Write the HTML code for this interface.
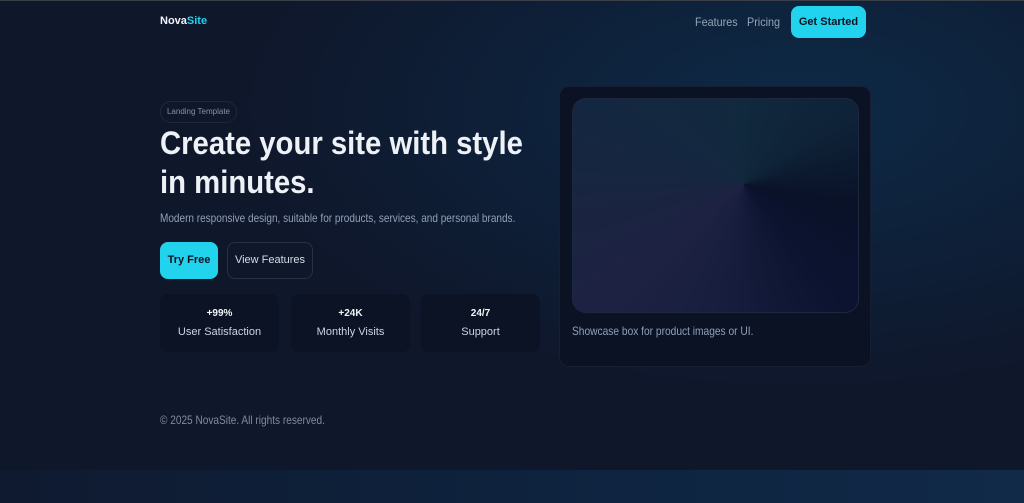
<!DOCTYPE html>
<html><head><meta charset="utf-8"><style>
*{margin:0;padding:0;box-sizing:border-box}
body{width:1024px;height:503px;overflow:hidden;font-family:"Liberation Sans",sans-serif;color:#e5e9f0;position:relative;
background:radial-gradient(ellipse 560px 280px at 800px 110px,#0d2a47 0%,rgba(13,42,71,0.5) 50%,rgba(15,23,42,0) 100%),#0f172b;}
.top{position:absolute;left:0;top:0;width:1024px;height:1px;background:#3a3f48}
.band{position:absolute;left:0;top:470px;width:1024px;height:33px;background:linear-gradient(90deg,#0f1a30,#0e2440 60%,#112a48)}
.n{position:absolute;white-space:nowrap}
.sq{display:inline-block;transform-origin:left top}
</style></head><body>
<div class="top"></div>
<div class="band"></div>
<div class="n" style="left:160px;top:15px;font-size:11px;font-weight:bold;color:#f1f5f9">Nova<span style="color:#22d3ee">Site</span></div>
<div class="n" style="left:695px;top:15px;font-size:12px;color:#94a3b8"><span class="sq" style="transform:scaleX(.9)">Features</span></div>
<div class="n" style="left:747px;top:15px;font-size:12px;color:#94a3b8"><span class="sq" style="transform:scaleX(.9)">Pricing</span></div>
<div class="n" style="left:791px;top:6px;width:75px;height:32px;border-radius:8px;background:#22d3ee;color:#0b1220;font-size:11px;font-weight:bold;text-align:center;line-height:32px">Get Started</div>
<div class="n" style="left:160px;top:101px;width:77px;height:22px;border:1px solid #1e293b;border-radius:11px;font-size:8px;color:#8391a6;text-align:center;line-height:20px">Landing Template</div>
<div class="n" style="left:160px;top:124px;font-size:32px;font-weight:bold;line-height:39px;color:#eef2f6"><span class="sq" style="transform:scaleX(.915)">Create your site with style<br>in minutes.</span></div>
<div class="n" style="left:160px;top:211px;font-size:12px;color:#8fa0b8"><span class="sq" style="transform:scaleX(.835)">Modern responsive design, suitable for products, services, and personal brands.</span></div>
<div class="n" style="left:160px;top:242px;width:58px;height:37px;border-radius:8px;background:#22d3ee;color:#0b1220;font-size:11px;font-weight:bold;text-align:center;line-height:37px">Try Free</div>
<div class="n" style="left:227px;top:242px;width:86px;height:37px;border-radius:8px;border:1px solid #263246;color:#d6dde6;font-size:11px;text-align:center;line-height:35px">View Features</div>
<div class="n" style="left:160px;top:294px;width:119px;height:58px;border-radius:8px;background:#0c1324;text-align:center;font-size:11px;color:#cbd5e1"><div style="margin-top:14px;font-weight:bold;font-size:10px;color:#f1f5f9">+99%</div><div style="margin-top:7px">User Satisfaction</div></div>
<div class="n" style="left:291px;top:294px;width:119px;height:58px;border-radius:8px;background:#0c1324;text-align:center;font-size:11px;color:#cbd5e1"><div style="margin-top:14px;font-weight:bold;font-size:10px;color:#f1f5f9">+24K</div><div style="margin-top:7px">Monthly Visits</div></div>
<div class="n" style="left:421px;top:294px;width:119px;height:58px;border-radius:8px;background:#0c1324;text-align:center;font-size:11px;color:#cbd5e1"><div style="margin-top:14px;font-weight:bold;font-size:10px;color:#f1f5f9">24/7</div><div style="margin-top:7px">Support</div></div>
<div class="n" style="left:559px;top:86px;width:312px;height:281px;border-radius:10px;background:#0b1224;border:1px solid #151e33"></div>
<div class="n" style="left:572px;top:98px;width:287px;height:215px;border-radius:14px;border:1px solid #1c2840;background:conic-gradient(from 0deg at 60% 40%,#11293d 0deg,#0f2338 55deg,#0a1228 100deg,#0b1330 140deg,#161d3c 185deg,#1e2242 230deg,#152740 290deg,#11293d 360deg)"></div>
<div class="n" style="left:572px;top:324px;font-size:12px;color:#8fa0b8"><span class="sq" style="transform:scaleX(.85)">Showcase box for product images or UI.</span></div>
<div class="n" style="left:160px;top:413px;font-size:12px;color:#7d8ba0"><span class="sq" style="transform:scaleX(.84)">© 2025 NovaSite. All rights reserved.</span></div>
</body></html>
